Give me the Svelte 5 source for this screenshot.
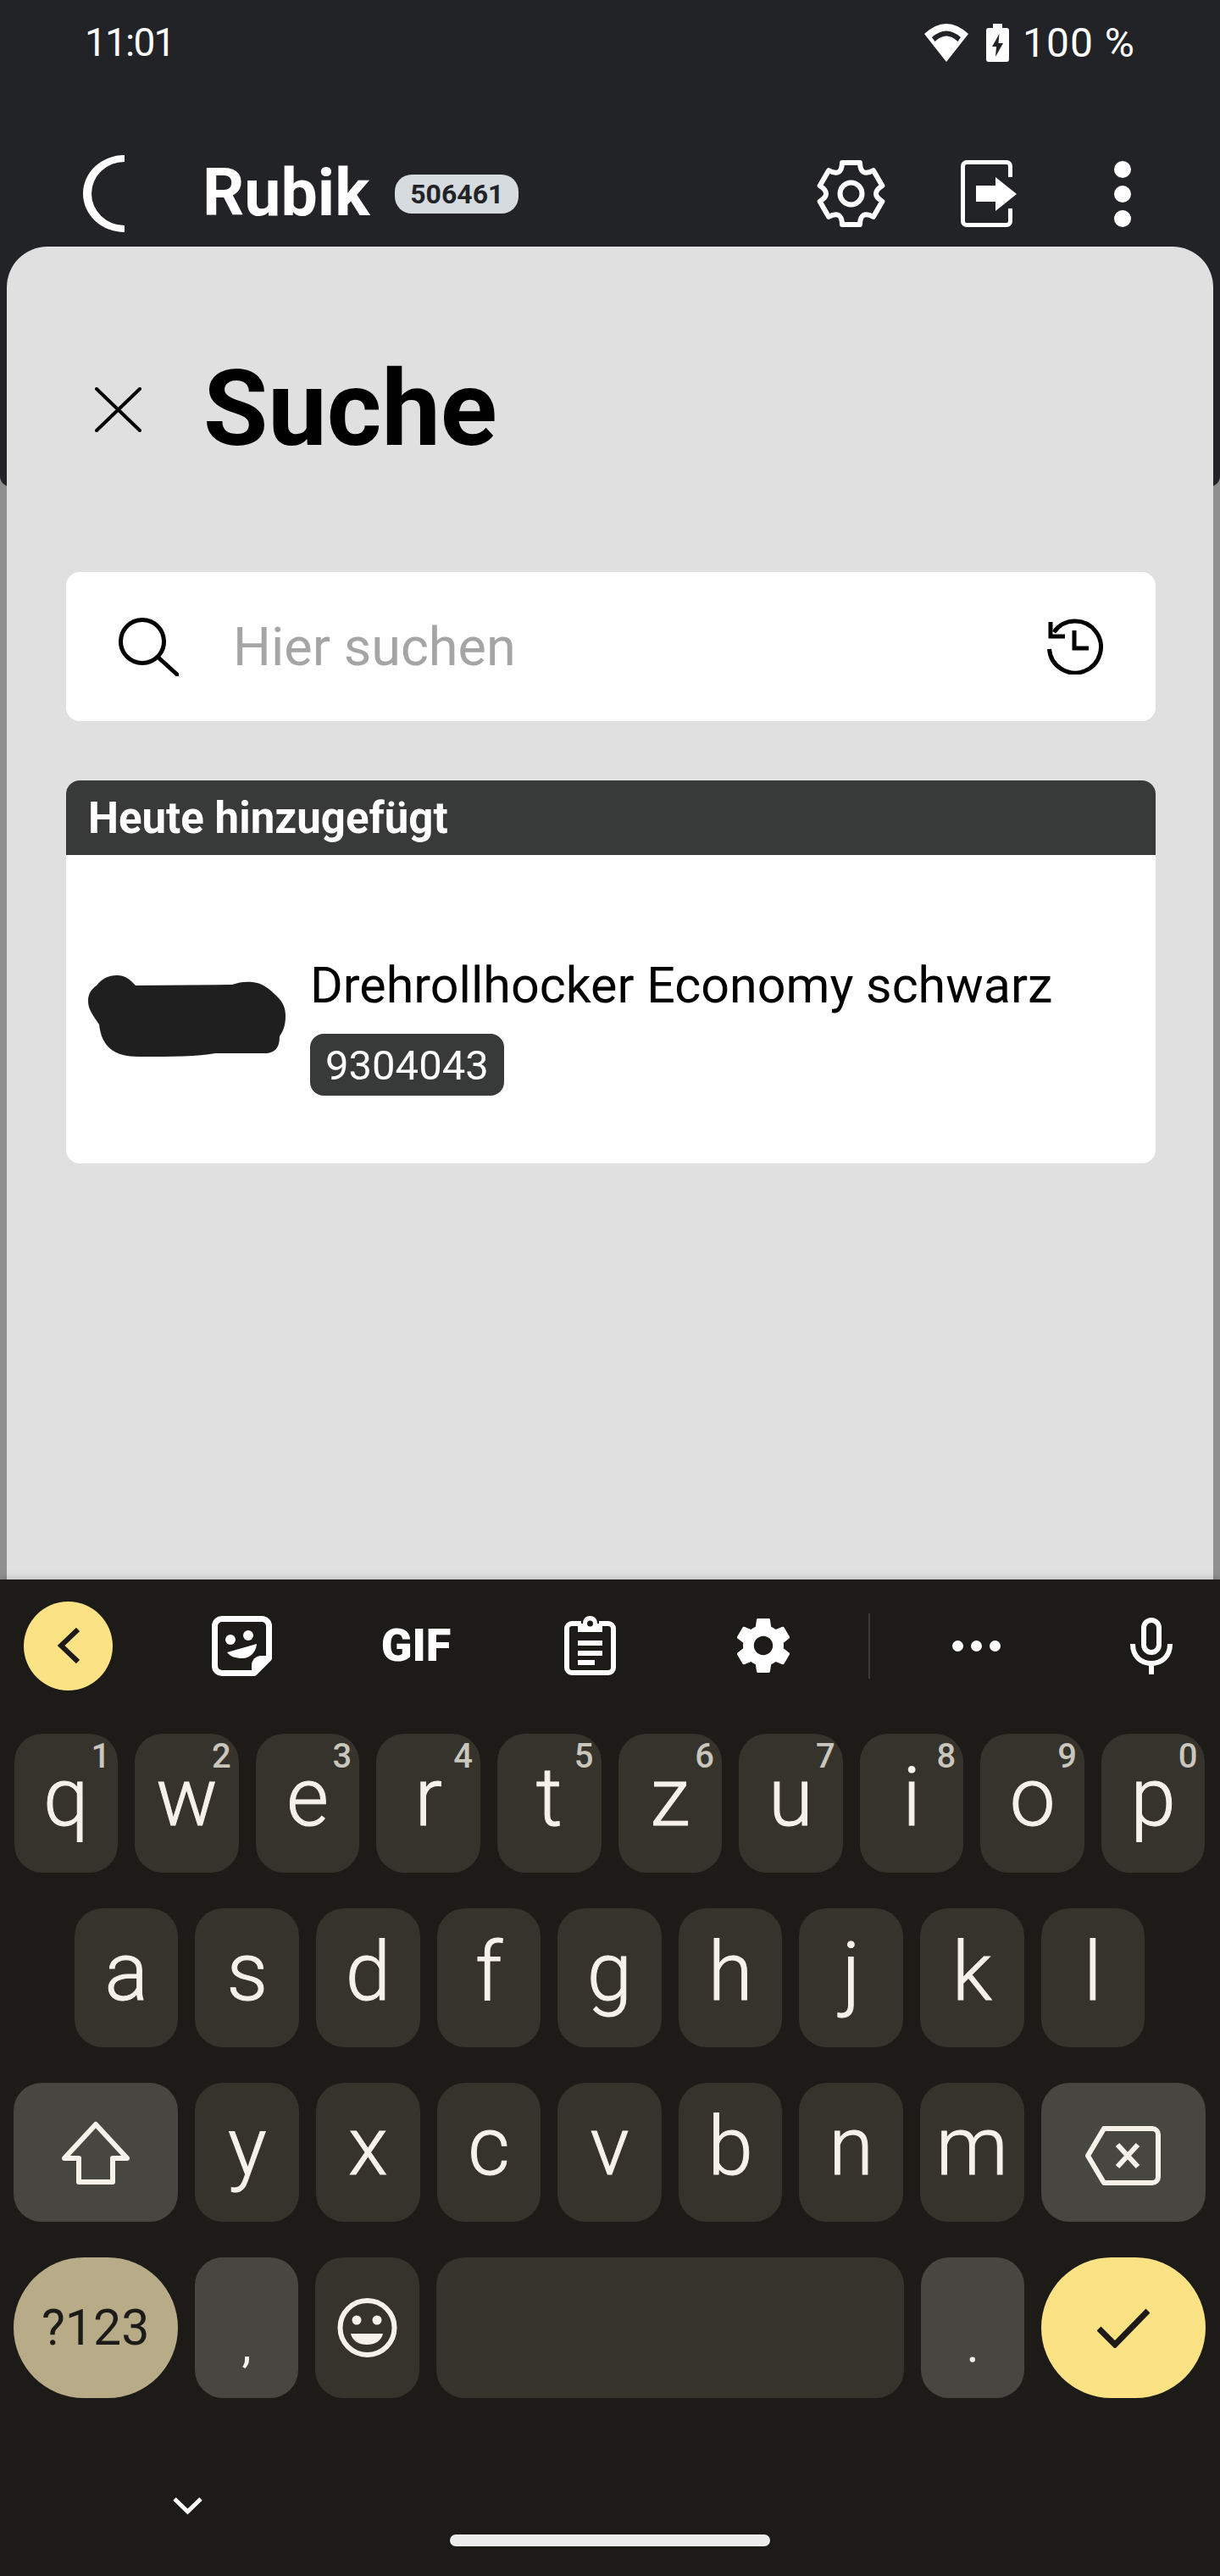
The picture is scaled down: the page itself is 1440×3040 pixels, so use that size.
<script>
  const row1 = [['q','1'],['w','2'],['e','3'],['r','4'],['t','5'],['z','6'],['u','7'],['i','8'],['o','9'],['p','0']];
  const row2 = ['a','s','d','f','g','h','j','k','l'];
  const row3 = ['y','x','c','v','b','n','m'];

  // outlined six-lobe gear for the app bar
  function polar(deg, r) {
    const a = (deg * Math.PI) / 180;
    return `${(40.5 + r * Math.cos(a)).toFixed(2)} ${(41.5 + r * Math.sin(a)).toFixed(2)}`;
  }

  function gearPath() {
    let d = `M${polar(-106, 38)}`;
    for (let i = 0; i < 6; i++) {
      const a = -90 + 60 * i;
      d += ` L${polar(a + 16, 38)} Q${polar(a + 30, 22)} ${polar(a + 44, 38)}`;
    }
    return d + ' Z';
  }

  const gear = gearPath();
</script>

<div class="screen">
  <div class="backdrop">
    <div class="top">
      <div class="status">
        <span class="time">11:01</span>
        <div class="status-right">
          <svg class="wifi" viewBox="0 0 52 45" width="52" height="45">
            <path d="M0 12 Q26 -12 52 12 L26 45 Z" fill="#fff"/>
            <path d="M9 16 Q26 1 43 16 L39.500 21 Q26 8 12.500 21 Z" fill="#222326"/>
          </svg>
          <svg class="battery" viewBox="0 0 27 45" width="27" height="45">
            <path d="M8 0 H19 V5 H24 a3 3 0 0 1 3 3 V42 a3 3 0 0 1 -3 3 H3 a3 3 0 0 1 -3 -3 V8 a3 3 0 0 1 3 -3 H8 Z" fill="#fff"/>
            <path d="M15.500 12 L7 27 H12 L11 39 L20 23 H14.500 Z" fill="#222326"/>
          </svg>
          <span class="pct">100 %</span>
        </div>
      </div>

      <div class="appbar">
        <svg class="spinner" viewBox="0 0 49 91" width="49" height="91">
          <path d="M49 0 A49 45.500 0 0 0 49 91 V83 A39 37.500 0 0 1 49 8 Z" fill="#fff"/>
        </svg>
        <span class="app-name">Rubik</span>
        <span class="app-id">506461</span>
        <div class="app-actions">
          <svg class="gear" viewBox="0 0 81 83" width="81" height="83" fill="none" stroke="#fff" stroke-width="6" stroke-linejoin="round">
            <path d={gear}/>
            <circle cx="40.500" cy="41.500" r="13"/>
          </svg>
          <svg class="exit" viewBox="0 0 66 79" width="66" height="79">
            <path d="M58.500 20 V7 a4.500 4.500 0 0 0 -4.500 -4.500 H7 a4.500 4.500 0 0 0 -4.500 4.500 V72 a4.500 4.500 0 0 0 4.500 4.500 H54 a4.500 4.500 0 0 0 4.500 -4.500 V57" fill="none" stroke="#fff" stroke-width="5"/>
            <path d="M18 30 H41 V20 L66 40 L41 60 V49 H18 Z" fill="#fff"/>
          </svg>
          <svg class="dots" viewBox="0 0 20 78" width="20" height="78" fill="#fff">
            <circle cx="10" cy="10" r="10"/>
            <circle cx="10" cy="39" r="10"/>
            <circle cx="10" cy="68" r="10"/>
          </svg>
        </div>
      </div>
    </div>

    <div class="sheet">
      <div class="sheet-head">
        <svg class="close" viewBox="0 0 55 53" width="55" height="53">
          <path d="M2 2 L53 51 M53 2 L2 51" stroke="#000" stroke-width="4" stroke-linecap="round" fill="none"/>
        </svg>
        <h1>Suche</h1>
      </div>

      <div class="search">
        <svg viewBox="0 0 71 69" width="71" height="69" fill="none" stroke="#000" stroke-width="5" stroke-linecap="round">
          <circle cx="28" cy="28" r="25.500"/>
          <path d="M47 47 L69 67"/>
        </svg>
        <input type="text" placeholder="Hier suchen" />
        <svg viewBox="0 0 67 66" width="67" height="66" fill="none" stroke="#000" stroke-width="5">
          <path d="M9 16 A30.500 30.500 0 1 1 3.500 36"/>
          <path d="M5 4 V21 H22"/>
          <path d="M33 14 V35 H50"/>
        </svg>
      </div>

      <div class="card">
        <div class="card-head">Heute hinzugefügt</div>
        <div class="item">
          <svg class="blob" viewBox="0 0 233 96" width="233" height="96">
            <path d="M34 0 C45 0 50 6 56 12 L170 11 C178 8 186 7 194 8 C206 9 214 16 222 24 C231 32 233 40 233 48 C233 60 230 66 226 72 C226 84 222 92 208 92 L150 92 C130 96 100 96 60 96 C30 96 16 84 13 58 C5 46 0 40 0 30 C0 22 4 16 10 12 C16 4 24 0 34 0 Z" fill="#1f1f1f"/>
          </svg>
          <div class="item-text">
            <div class="item-title">Drehrollhocker Economy schwarz</div>
            <span class="item-code">9304043</span>
          </div>
        </div>
      </div>
    </div>
  </div>

  <div class="keyboard">
    <div class="toolbar">
      <div class="back">
        <svg viewBox="0 0 26 42" width="26" height="42" fill="none" stroke="#1c1b17" stroke-width="6">
          <path d="M24 2 L4 21 L24 40"/>
        </svg>
      </div>
      <svg class="t-sticker" viewBox="0 0 71 71" width="71" height="71">
        <path d="M12 3.500 H59 a8.500 8.500 0 0 1 8.500 8.500 V50 L50 67.500 H12 a8.500 8.500 0 0 1 -8.500 -8.500 V12 a8.500 8.500 0 0 1 8.500 -8.500 Z" fill="none" stroke="#fff" stroke-width="7" stroke-linejoin="round"/>
        <path d="M69 47 H58 C52 47 47 52 47 58 V69 Z" fill="#fff"/>
        <circle cx="22" cy="28" r="6" fill="#fff"/>
        <circle cx="43" cy="23" r="6" fill="#fff"/>
        <path d="M18 43 L53 33 C52 44 44 50 36 50 C28 50 22 48 18 43 Z" fill="#fff"/>
      </svg>
      <span class="t-gif">GIF</span>
      <svg class="t-clip" viewBox="0 0 61 70" width="61" height="70">
        <path d="M20 9 H9 a6 6 0 0 0 -6 6 V61 a6 6 0 0 0 6 6 H52 a6 6 0 0 0 6 -6 V15 a6 6 0 0 0 -6 -6 H41" fill="none" stroke="#fff" stroke-width="6"/>
        <path d="M16 9 H22 C22 3 26 0 30.500 0 C35 0 39 3 39 9 H45 V19 H16 Z" fill="#fff"/>
        <circle cx="30.500" cy="9" r="3.500" fill="#1c1b17"/>
        <rect x="16" y="29" width="29" height="6" fill="#fff"/>
        <rect x="16" y="41" width="29" height="6" fill="#fff"/>
        <rect x="16" y="52" width="20" height="6" fill="#fff"/>
      </svg>
      <svg class="t-gear" viewBox="2.300 2 19.400 20" width="62" height="64" fill="#fff">
        <path d="M19.430 12.980c.04-.32.07-.64.07-.98s-.03-.66-.07-.98l2.110-1.650c.19-.15.24-.42.12-.64l-2-3.460c-.12-.22-.39-.3-.61-.22l-2.490 1c-.52-.4-1.080-.73-1.690-.98l-.38-2.650C14.460 2.180 14.250 2 14 2h-4c-.25 0-.46.18-.49.42l-.38 2.650c-.61.25-1.170.59-1.690.98l-2.490-1c-.23-.09-.49 0-.61.22l-2 3.460c-.13.22-.07.49.12.64l2.110 1.650c-.04.32-.07.65-.07.98s.03.66.07.98l-2.110 1.650c-.19.15-.24.42-.12.64l2 3.460c.12.22.39.3.61.22l2.490-1c.52.4 1.080.73 1.690.98l.38 2.650c.03.24.24.42.49.42h4c.25 0 .46-.18.49-.42l.38-2.650c.61-.25 1.170-.59 1.690-.98l2.490 1c.23.09.49 0 .61-.22l2-3.460c.12-.22.07-.49-.12-.64l-2.110-1.650zM12 15.500c-1.930 0-3.500-1.570-3.500-3.500s1.570-3.500 3.500-3.500 3.500 1.570 3.500 3.500-1.570 3.500-3.500 3.500z"/>
      </svg>
      <div class="t-divider"></div>
      <svg class="t-more" viewBox="0 0 57 13" width="57" height="13" fill="#fff">
        <circle cx="6.500" cy="6.500" r="6.500"/>
        <circle cx="28.500" cy="6.500" r="6.500"/>
        <circle cx="50.500" cy="6.500" r="6.500"/>
      </svg>
      <svg class="t-mic" viewBox="0 0 50 67" width="50" height="67" fill="none" stroke="#fff" stroke-width="6">
        <rect x="16" y="3" width="18" height="38" rx="9"/>
        <path d="M3 31 C3 46 13 54 25 54 C37 54 47 46 47 31"/>
        <path d="M25 54 V67"/>
      </svg>
    </div>

    <div class="kb-row">
      {#each row1 as [letter, num]}
        <div class="key">{letter}<span class="hint">{num}</span></div>
      {/each}
    </div>
    <div class="kb-row">
      {#each row2 as letter}
        <div class="key">{letter}</div>
      {/each}
    </div>
    <div class="kb-row">
      <div class="key wide mod">
        <svg viewBox="0 0 80 75" width="80" height="75">
          <path d="M40 4 L77 44 H60 V72 H20 V44 H3 Z" fill="none" stroke="#f6f2e9" stroke-width="6" stroke-linejoin="round"/>
        </svg>
      </div>
      {#each row3 as letter}
        <div class="key">{letter}</div>
      {/each}
      <div class="key wide mod">
        <svg class="bksp" viewBox="0 0 89 70" width="89" height="70" fill="none" stroke="#f6f2e9" stroke-width="6" stroke-linejoin="round">
          <path d="M22 3 H79 a7 7 0 0 1 7 7 V60 a7 7 0 0 1 -7 7 H22 L3 35 Z"/>
          <path d="M38 22 L62 48 M62 22 L38 48"/>
        </svg>
      </div>
    </div>
    <div class="kb-row last">
      <div class="key wide pill sym">?123</div>
      <div class="key mod punct">,</div>
      <div class="key">
        <svg viewBox="0 0 71 70" width="71" height="70">
          <circle cx="35.500" cy="35" r="32" fill="none" stroke="#f6f2e9" stroke-width="6"/>
          <circle cx="23" cy="26" r="5.500" fill="#f6f2e9"/>
          <circle cx="47" cy="26" r="5.500" fill="#f6f2e9"/>
          <path d="M16 42 H54 C52 51 44 55 35 55 C26 55 18 51 16 42 Z" fill="#f6f2e9"/>
        </svg>
      </div>
      <div class="key space"></div>
      <div class="key mod punct">.</div>
      <div class="key wide pill enter">
        <svg viewBox="0 0 62 47" width="62" height="47" fill="none" stroke="#1c1b17" stroke-width="7">
          <path d="M2 24 L21 43 L60 3"/>
        </svg>
      </div>
    </div>

    <div class="kb-bottom">
      <svg class="kb-hide" viewBox="0 0 35 22" width="35" height="22" fill="none" stroke="#fff" stroke-width="5">
        <path d="M2 3 L17.500 18 L33 3"/>
      </svg>
      <div class="home-bar"></div>
    </div>
  </div>
</div>

<style>
  :global(body) {
    margin: 0;
    background: #1c1b17;
  }

  .screen {
    width: 1440px;
    height: 3040px;
    overflow: hidden;
    font-family: Roboto, "Liberation Sans", sans-serif;
    display: flex;
    flex-direction: column;
  }

  svg {
    display: block;
    flex: none;
  }

  .backdrop {
    position: relative;
    height: 1864px;
    background: #8f8f8f;
  }

  .top {
    height: 574px;
    background: #222326;
    border-radius: 0 0 12px 12px;
    color: #fff;
  }

  .status {
    height: 100px;
    display: flex;
    align-items: center;
    justify-content: space-between;
    padding: 0 100px;
  }

  .time {
    font-size: 46px;
    letter-spacing: -1.800px;
  }

  .status-right {
    display: flex;
    align-items: center;
    font-size: 48px;
    letter-spacing: 1px;
  }

  .battery {
    margin: 0 16px 0 21px;
  }

  .appbar {
    display: flex;
    align-items: center;
    height: 91px;
    margin-top: 83px;
    padding-left: 98px;
  }

  .app-name {
    margin-left: 92px;
    font-size: 77px;
    font-weight: 700;
    line-height: 93px;
  }

  .app-id {
    margin-left: 30px;
    width: 146px;
    height: 46px;
    line-height: 46px;
    text-align: center;
    border-radius: 20px;
    background: #d5dbde;
    color: #222326;
    font-size: 32px;
    font-weight: 700;
  }

  .app-actions {
    margin-left: auto;
    display: flex;
    align-items: center;
    padding-right: 105px;
  }

  .exit {
    margin: 0 115px 0 89px;
  }

  .sheet {
    position: absolute;
    left: 8px;
    right: 8px;
    top: 291px;
    bottom: 0;
    background: #e0e0e0;
    border-radius: 48px 48px 0 0;
    padding: 0 68px 0 70px;
  }

  .sheet-head {
    display: flex;
    align-items: center;
    height: 112px;
    margin-top: 136px;
    padding-left: 34px;
  }

  h1 {
    margin: 0 0 0 73px;
    font-size: 124px;
    font-weight: 700;
    line-height: 112px;
    color: #000;
  }

  .search {
    display: flex;
    align-items: center;
    height: 176px;
    margin-top: 136px;
    padding: 0 62px;
    background: #fff;
    border-radius: 16px;
  }

  .search input {
    flex: 1;
    min-width: 0;
    margin-left: 64px;
    padding: 0;
    border: 0;
    outline: none;
    background: none;
    font-family: inherit;
    font-size: 63px;
    color: #000;
  }

  .search input::placeholder {
    color: #a5a5a5;
    opacity: 1;
  }

  .card {
    margin-top: 70px;
    height: 452px;
    background: #fff;
    border-radius: 16px;
    overflow: hidden;
  }

  .card-head {
    height: 88px;
    line-height: 90px;
    padding-left: 26px;
    background: #383a39;
    color: #fff;
    font-size: 51px;
    font-weight: 700;
  }

  .item {
    display: flex;
    align-items: flex-start;
    padding: 118px 0 0 26px;
  }

  .blob {
    margin-top: 24px;
  }

  .item-text {
    margin-left: 29px;
  }

  .item-title {
    font-size: 59.200px;
    line-height: 72px;
    color: #000;
  }

  .item-code {
    display: inline-block;
    margin-top: 21px;
    height: 73px;
    line-height: 75px;
    padding: 0 18px;
    border-radius: 16px;
    background: #383a39;
    color: #fff;
    font-size: 49px;
  }

  .keyboard {
    flex: 1;
    background: #1c1b17;
    box-shadow: 0 -3px 8px rgba(0, 0, 0, 0.12);
    position: relative;
  }

  .toolbar {
    height: 182px;
    display: flex;
    align-items: center;
    padding: 0 0 26px 28px;
    box-sizing: border-box;
  }

  .back {
    width: 105px;
    height: 105px;
    border-radius: 50%;
    background: #fbe285;
    display: flex;
    align-items: center;
    justify-content: center;
    flex: none;
  }

  .t-sticker {
    margin-left: 117px;
  }

  .t-gif {
    margin-left: 128px;
    width: 84px;
    color: #fff;
    font-size: 54px;
    font-weight: 900;
    line-height: 60px;
    text-align: center;
  }

  .t-clip {
    margin-left: 133px;
  }

  .t-gear {
    margin-left: 143px;
  }

  .t-divider {
    width: 2px;
    height: 77px;
    margin-left: 93px;
    background: #3b3a35;
  }

  .t-more {
    margin-left: 97px;
  }

  .t-mic {
    margin-left: 153px;
  }

  .kb-row {
    display: flex;
    justify-content: center;
    gap: 20px;
    height: 164px;
    margin-bottom: 42px;
    padding-right: 1px;
  }

  .kb-row.last {
    height: 166px;
    margin-bottom: 0;
  }

  .key {
    position: relative;
    width: 122.600px;
    flex: none;
    box-sizing: border-box;
    padding-bottom: 14px;
    display: flex;
    align-items: center;
    justify-content: center;
    border-radius: 33px;
    background: #35332c;
    color: #f6f2e9;
    font-size: 96px;
    font-weight: 300;
    line-height: 80px;
    -webkit-text-stroke: 1px #f6f2e9;
  }

  .hint {
    position: absolute;
    right: 9px;
    top: 12px;
    font-size: 40px;
    font-weight: 500;
    line-height: 30px;
    color: #c9c6be;
    -webkit-text-stroke: 0;
  }

  .key.wide {
    width: 194px;
    padding-bottom: 0;
  }

  .key.mod {
    background: #484640;
  }

  .key.space {
    width: 552px;
  }

  .key.punct {
    font-size: 56px;
    font-weight: 400;
    padding: 42px 0 0;
    -webkit-text-stroke: 0;
  }

  .key:has(svg) {
    padding-bottom: 0;
  }

  .bksp {
    margin-top: 8px;
  }

  .key.pill {
    border-radius: 83px;
  }

  .key.sym {
    background: #b7ac87;
    color: #1c1b17;
    font-size: 59px;
    font-weight: 400;
    -webkit-text-stroke: 0;
  }

  .key.enter {
    background: #fbe285;
  }

  .kb-bottom {
    position: relative;
    height: 210px;
  }

  .kb-hide {
    position: absolute;
    left: 204px;
    top: 116px;
  }

  .home-bar {
    position: absolute;
    left: 531px;
    top: 161px;
    width: 378px;
    height: 14px;
    border-radius: 7px;
    background: #ececec;
  }
</style>
